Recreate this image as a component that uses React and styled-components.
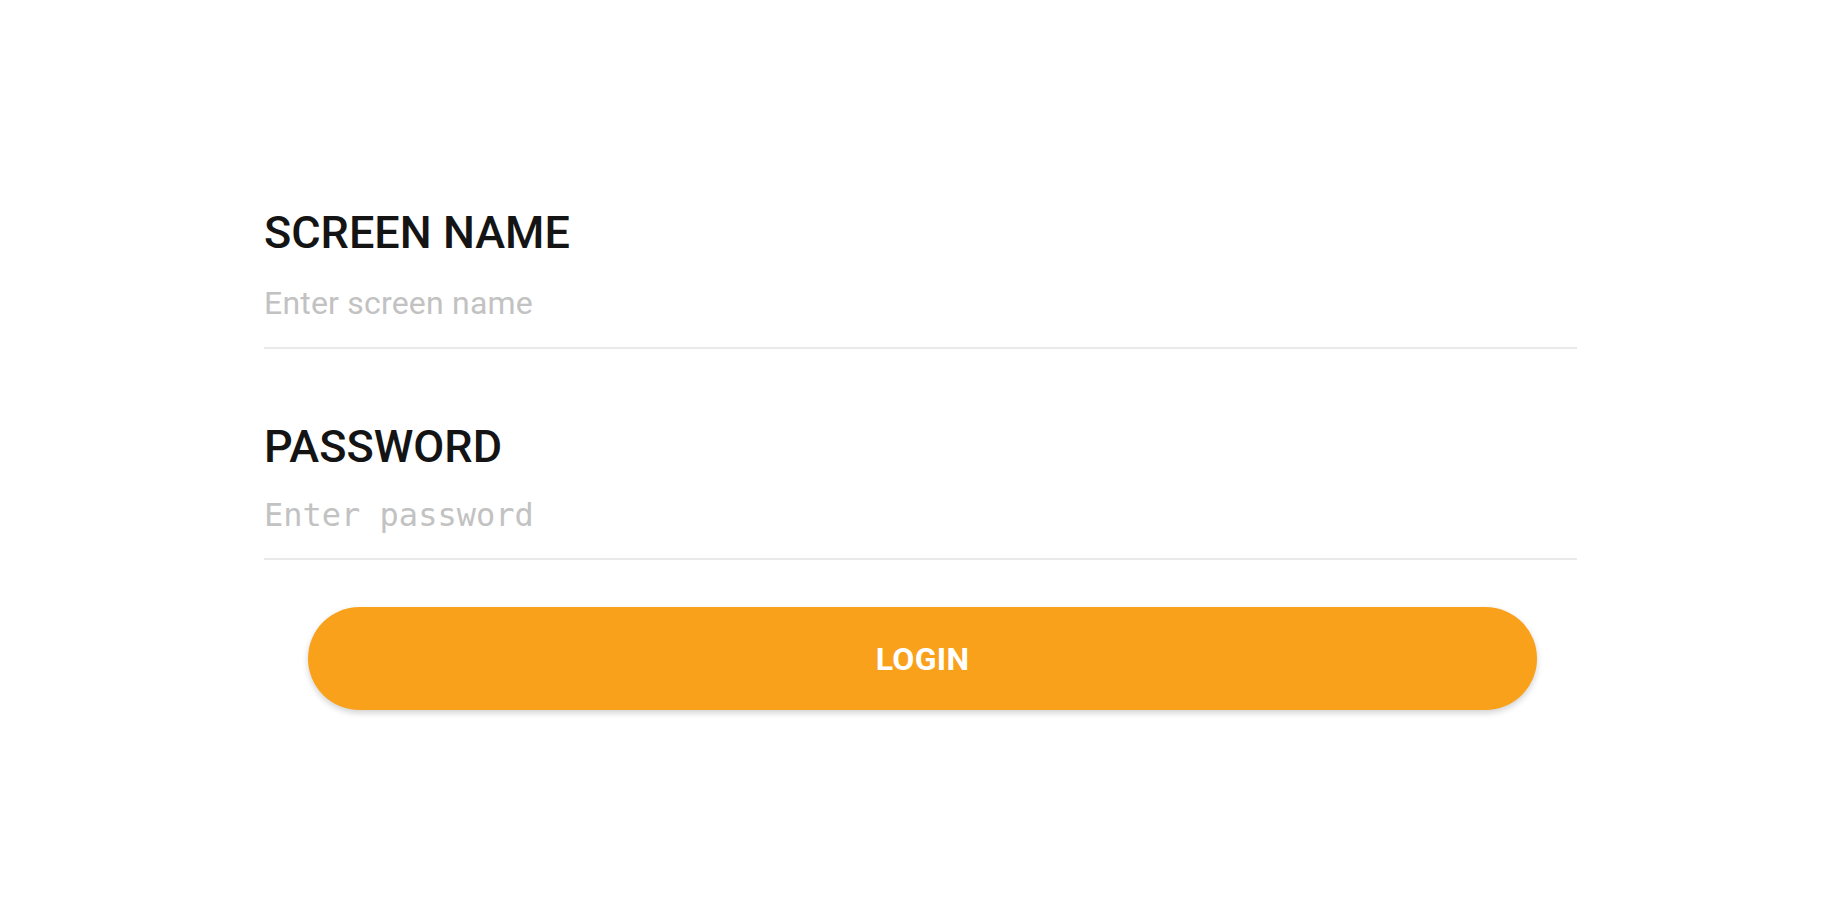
import React from "react";
import styled, { createGlobalStyle } from "styled-components";

const GlobalStyle = createGlobalStyle`
	html, body {
		margin: 0;
		padding: 0;
		background: #ffffff;
		font-family: Roboto, "Noto Sans", sans-serif;
	}
`;

const LoginScreen = () => {
	return (
		<S.Page>
			<GlobalStyle />
			<S.Form onSubmit={(e) => e.preventDefault()}>
				<S.Field>
					<S.Label htmlFor="screenName">SCREEN NAME</S.Label>
					<S.Input id="screenName" type="text" placeholder="Enter screen name" />
				</S.Field>
				<S.Field $spaced>
					<S.Label htmlFor="password">PASSWORD</S.Label>
					<S.Input id="password" type="password" placeholder="Enter password" $mono />
				</S.Field>
				<S.Button type="submit">LOGIN</S.Button>
			</S.Form>
		</S.Page>
	);
};

const S = {
	Page: styled.div`
		box-sizing: border-box;
		width: 100%;
		min-height: 900px;
		padding: 207px 0 0 264px;
	`,
	Form: styled.form`
		width: 1313px;
		display: flex;
		flex-direction: column;
	`,
	Field: styled.div`
		display: flex;
		flex-direction: column;
		margin-top: ${(p) => (p.$spaced ? "72px" : "0")};
	`,
	Label: styled.label`
		font-family: Roboto, sans-serif;
		font-weight: 500;
		font-size: 45px;
		line-height: 52px;
		color: #141414;
		margin-bottom: ${(p) => (p.htmlFor === "password" ? "24px" : "26px")};
	`,
	Input: styled.input`
		box-sizing: content-box;
		border: none;
		border-bottom: 2px solid #e9e9e9;
		outline: none;
		background: transparent;
		padding: 0 0 ${(p) => (p.$mono ? "25px" : "26px")} 0;
		margin: 0;
		height: 36px;
		line-height: 36px;
		font-family: ${(p) =>
			p.$mono ? `"DejaVu Sans Mono", monospace` : `Roboto, sans-serif`};
		font-size: 32px;
		letter-spacing: ${(p) => (p.$mono ? "0" : "0.2px")};
		color: #333;

		&::placeholder {
			color: #c2c2c2;
		}
	`,
	Button: styled.button`
		align-self: flex-start;
		margin: 47px 0 0 44px;
		width: 1229px;
		height: 103px;
		border: none;
		border-radius: 52px;
		background: #f9a11b;
		color: #ffffff;
		font-family: Roboto, sans-serif;
		font-weight: 700;
		font-size: 32px;
		letter-spacing: 0.3px;
		box-shadow: 0 3px 6px rgba(0, 0, 0, 0.18);
		cursor: pointer;
	`,
};

export default LoginScreen;
